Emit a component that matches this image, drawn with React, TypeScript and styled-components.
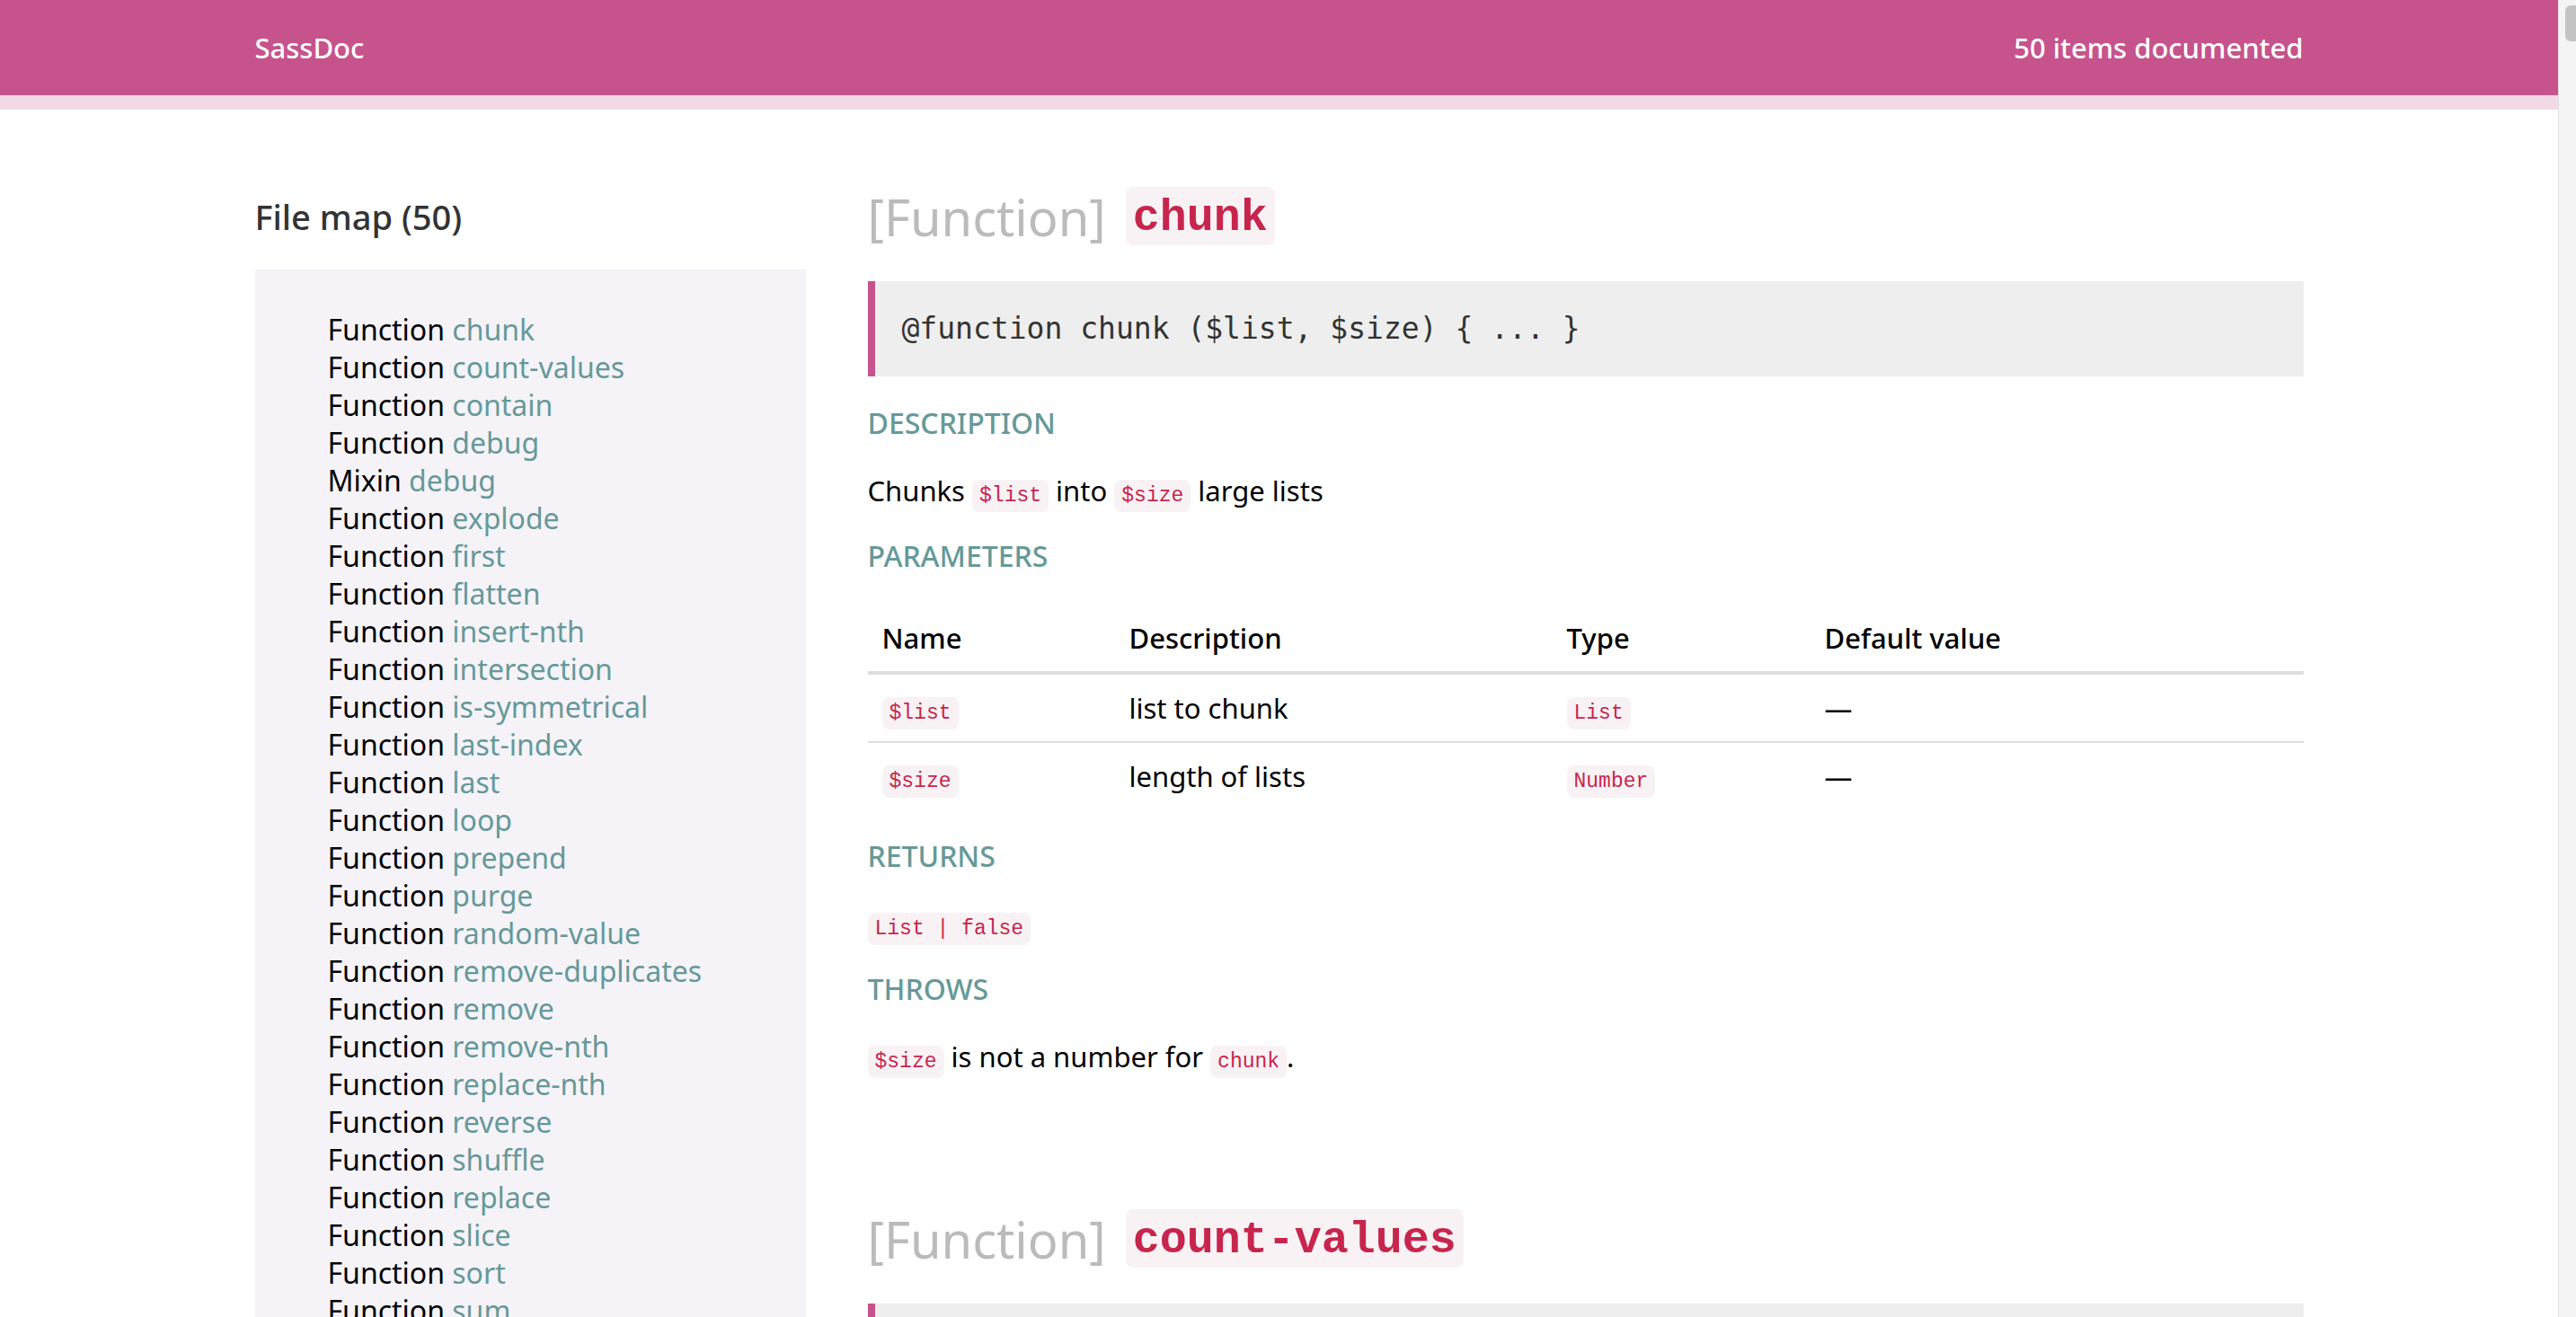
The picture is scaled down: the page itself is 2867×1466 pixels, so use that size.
import React from 'react';
import styled, { createGlobalStyle } from 'styled-components';

const GlobalStyle = createGlobalStyle`
  html, body {
    margin: 0;
    padding: 0;
    height: 100%;
    overflow: hidden;
  }
  body {
    font-family: "Noto Sans", "Open Sans", sans-serif;
    color: #000;
    background: #fff;
  }
`;

const files = [
  ['Function', 'chunk'],
  ['Function', 'count-values'],
  ['Function', 'contain'],
  ['Function', 'debug'],
  ['Mixin', 'debug'],
  ['Function', 'explode'],
  ['Function', 'first'],
  ['Function', 'flatten'],
  ['Function', 'insert-nth'],
  ['Function', 'intersection'],
  ['Function', 'is-symmetrical'],
  ['Function', 'last-index'],
  ['Function', 'last'],
  ['Function', 'loop'],
  ['Function', 'prepend'],
  ['Function', 'purge'],
  ['Function', 'random-value'],
  ['Function', 'remove-duplicates'],
  ['Function', 'remove'],
  ['Function', 'remove-nth'],
  ['Function', 'replace-nth'],
  ['Function', 'reverse'],
  ['Function', 'shuffle'],
  ['Function', 'replace'],
  ['Function', 'slice'],
  ['Function', 'sort'],
  ['Function', 'sum'],
  ['Function', 'tail'],
  ['Function', 'to-list'],
  ['Function', 'to-map'],
  ['Function', 'to-string'],
  ['Function', 'union'],
  ['Function', 'walk'],
];

const params = [
  { name: '$list', desc: 'list to chunk', type: 'List' },
  { name: '$size', desc: 'length of lists', type: 'Number' },
];

const App = () => {
  return (
    <Page>
      <GlobalStyle />
      <Viewport>
        <Header>
          <HeaderInner>
            <span>SassDoc</span>
            <span>50 items documented</span>
          </HeaderInner>
        </Header>
        <Layout>
          <Sidebar>
            <SidebarTitle>File map (50)</SidebarTitle>
            <FileMap>
              {files.map(([kind, name], i) => (
                <FileItem key={i}>
                  {kind} <FileLink>{name}</FileLink>
                </FileItem>
              ))}
            </FileMap>
          </Sidebar>
          <Main>
            <Item>
              <ItemTitle>
                <Kind>[Function]</Kind>
                <TitleCode>chunk</TitleCode>
              </ItemTitle>
              <Signature>@function chunk ($list, $size) {'{'} ... {'}'}</Signature>
              <SectionTitle>DESCRIPTION</SectionTitle>
              <Para>
                Chunks <Code>$list</Code> into <Code>$size</Code> large lists
              </Para>
              <SectionTitle>PARAMETERS</SectionTitle>
              <Table>
                <colgroup>
                  <col style={{ width: 275 }} />
                  <col style={{ width: 487 }} />
                  <col style={{ width: 287 }} />
                  <col />
                </colgroup>
                <thead>
                  <tr>
                    <Th>Name</Th>
                    <Th>Description</Th>
                    <Th>Type</Th>
                    <Th>Default value</Th>
                  </tr>
                </thead>
                <tbody>
                  {params.map(p => (
                    <Row key={p.name}>
                      <Td><Code>{p.name}</Code></Td>
                      <Td>{p.desc}</Td>
                      <Td><Code>{p.type}</Code></Td>
                      <Td>—</Td>
                    </Row>
                  ))}
                </tbody>
              </Table>
              <SectionTitle>RETURNS</SectionTitle>
              <Para>
                <Code>List | false</Code>
              </Para>
              <SectionTitle>THROWS</SectionTitle>
              <Para>
                <Code>$size</Code> is not a number for <Code>chunk</Code>.
              </Para>
            </Item>
            <Item $next>
              <ItemTitle>
                <Kind>[Function]</Kind>
                <TitleCode>count-values</TitleCode>
              </ItemTitle>
              <Signature>@function count-values ($list) {'{'} ... {'}'}</Signature>
              <SectionTitle>DESCRIPTION</SectionTitle>
              <Para>
                Count the number of occurrences of each value of <Code>$list</Code>
              </Para>
            </Item>
          </Main>
        </Layout>
      </Viewport>
      <ScrollTrack>
        <ScrollThumb />
      </ScrollTrack>
    </Page>
  );
};

const Page = styled.div`
  height: 100vh;
  display: flex;
  overflow: hidden;
`;

const Viewport = styled.div`
  flex: 1;
  min-width: 0;
  overflow: hidden;
`;

const ScrollTrack = styled.div`
  position: relative;
  flex: none;
  width: 20px;
  background: #f4f4f4;
  border-left: 1px solid #e2e2e2;
  box-sizing: border-box;
`;

const ScrollThumb = styled.div`
  position: absolute;
  top: 6px;
  right: 0;
  width: 12px;
  height: 40px;
  border-radius: 6px 0 0 6px;
  background: #c4c4c4;
`;

const Header = styled.header`
  background: #c6538c;
  border-bottom: 16px solid #f2d9e5;
`;

const HeaderInner = styled.div`
  max-width: 2280px;
  height: 106px;
  margin: 0 auto;
  display: flex;
  align-items: center;
  justify-content: space-between;
  color: #fff;
  font-size: 31px;
  font-weight: 500;
`;

const Layout = styled.div`
  max-width: 2280px;
  margin: 0 auto;
  display: grid;
  grid-template-columns: 613px 1fr;
  column-gap: 69px;
`;

const Sidebar = styled.aside`
  display: flex;
  flex-direction: column;
`;

const SidebarTitle = styled.h2`
  margin: 94px 0 34px;
  font-size: 38px;
  line-height: 50px;
  font-weight: 500;
  color: #333;
`;

const FileMap = styled.ul`
  list-style: none;
  margin: 0;
  padding: 46px 0 40px 81px;
  background: #f5f3f8;
`;

const FileItem = styled.li`
  font-size: 32px;
  line-height: 42px;
  color: #000;
`;

const FileLink = styled.a`
  color: #669999;
  text-decoration: none;
`;

const Main = styled.main`
  min-width: 0;
`;

const Item = styled.section<{ $next?: boolean }>`
  margin-top: ${p => (p.$next ? '148px' : '85px')};
`;

const ItemTitle = styled.h1`
  margin: 0;
  display: flex;
  align-items: center;
  gap: 22px;
  height: 67px;
  font-size: 56px;
  font-weight: 400;
`;

const Kind = styled.span`
  color: #bbbbbb;
`;

const TitleCode = styled.code`
  font-family: "Liberation Mono", "Courier New", monospace;
  font-weight: 700;
  font-size: 50px;
  line-height: 57px;
  padding: 6px 8px 2px;
  color: #c7254e;
  background: #f9f2f4;
  border-radius: 8px;
`;

const Signature = styled.pre`
  margin: 39px 0 0;
  padding: 30px 30px;
  background: #eeeeee;
  border-left: 8px solid #c6538c;
  font-family: "DejaVu Sans Mono", monospace;
  font-size: 33px;
  line-height: 46px;
  color: #333;
`;

const SectionTitle = styled.h3`
  margin: 31px 0 0;
  font-size: 32px;
  line-height: 42px;
  font-weight: 500;
  color: #669999;
`;

const Para = styled.p`
  margin: 33px 0 0;
  font-size: 31px;
  line-height: 42px;
`;

const Code = styled.code`
  font-family: "Liberation Mono", "Courier New", monospace;
  font-size: 23px;
  line-height: 1;
  padding: 5px 8px;
  color: #c7254e;
  background: #f9f2f4;
  border-radius: 8px;
`;

const Table = styled.table`
  margin-top: 33px;
  width: 100%;
  border-collapse: collapse;
  table-layout: fixed;
`;

const Th = styled.th`
  text-align: left;
  padding: 16px;
  font-size: 31px;
  line-height: 42px;
  font-weight: 500;
  border-bottom: 4px solid #dddddd;
`;

const Row = styled.tr`
  & + & td {
    border-top: 2px solid #dddddd;
  }
`;

const Td = styled.td`
  padding: 16px;
  height: 42px;
  font-size: 31px;
  line-height: 42px;
  vertical-align: middle;
`;

export default App;
